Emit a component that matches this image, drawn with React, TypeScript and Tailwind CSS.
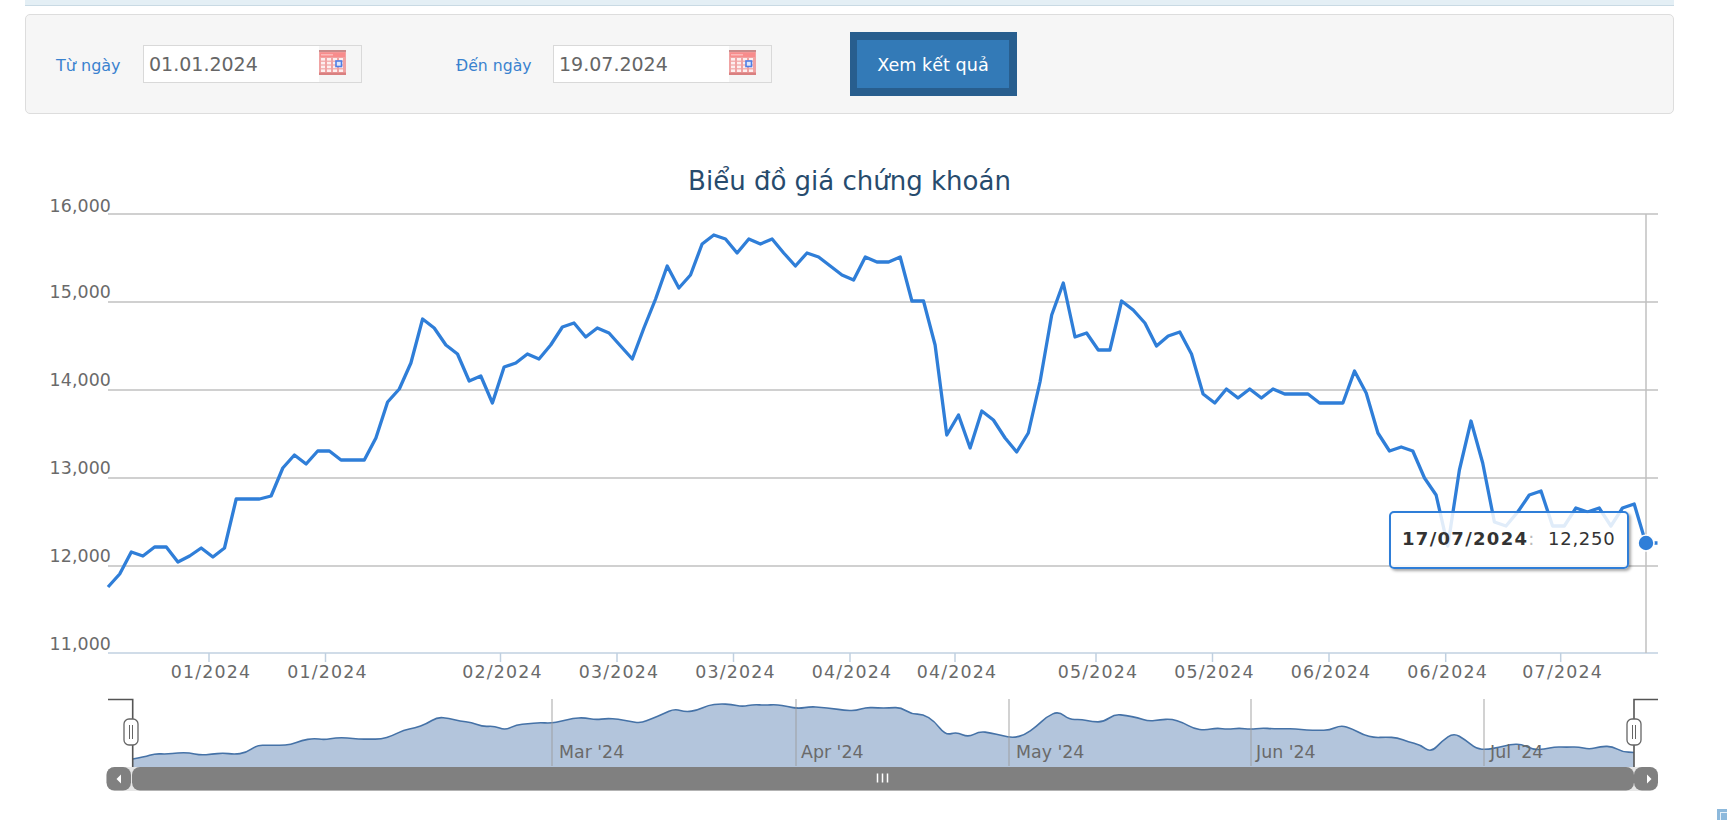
import React from "react";

// y pixel of each trading day on the main chart
const prices = [
  587, 574, 552, 556, 547, 547, 562, 556, 548, 557, 548, 499, 499, 499, 496, 468, 455, 464, 451, 451, 460, 460, 460, 438,
  402, 389, 363, 319, 328, 345, 354, 381, 376, 403, 367, 363, 354, 359, 345, 327, 323, 337, 328, 333, 346, 359, 328, 299,
  266, 288, 275, 244, 235, 239, 253, 239, 244, 239, 253, 266, 253, 257, 266, 275, 280, 257, 262, 262, 257, 301, 301, 345,
  435, 415, 448, 411, 420, 438, 452, 433, 382, 315, 283, 337, 333, 350, 350, 301, 310, 323, 346, 336, 332, 354, 394, 403,
  389, 398, 389, 398, 389, 394, 394, 394, 403, 403, 403, 371, 393, 433, 451, 447, 451, 478, 495, 546, 470, 421, 463, 522,
  526, 512, 495, 491, 526, 526, 508, 512, 508, 526, 508, 504, 543, 543,
];

const mainPoints = prices.map((y, i) => `${(108 + i * 11.65).toFixed(1)},${y}`).join(" ");

// navigator line is the same series squeezed and smoothed
const navXY = prices.map((y, i) => [132.7 + i * 11.29, 717 + (y - 319) * 0.157]);
let navLine = `M${navXY[0][0]} ${navXY[0][1]}`;
for (let i = 1; i < navXY.length - 1; i++) {
  const midX = (navXY[i][0] + navXY[i + 1][0]) / 2;
  const midY = (navXY[i][1] + navXY[i + 1][1]) / 2;
  navLine += ` Q${navXY[i][0]} ${navXY[i][1]} ${midX} ${midY}`;
}
navLine += ` L1634 752.5`;

const gridLines = [214, 302, 390, 478, 566];
const yLabels = [
  { text: "16,000", y: 212 },
  { text: "15,000", y: 298 },
  { text: "14,000", y: 386 },
  { text: "13,000", y: 474 },
  { text: "12,000", y: 562 },
  { text: "11,000", y: 650 },
];
const xLabels = [
  { text: "01/2024", x: 209 },
  { text: "01/2024", x: 325.5 },
  { text: "02/2024", x: 500.5 },
  { text: "03/2024", x: 617 },
  { text: "03/2024", x: 733.5 },
  { text: "04/2024", x: 850 },
  { text: "04/2024", x: 955 },
  { text: "05/2024", x: 1096 },
  { text: "05/2024", x: 1212.5 },
  { text: "06/2024", x: 1329 },
  { text: "06/2024", x: 1445.7 },
  { text: "07/2024", x: 1560.7 },
];
const navLabels = [
  { text: "Mar '24", lineX: 552, x: 559 },
  { text: "Apr '24", lineX: 796, x: 801 },
  { text: "May '24", lineX: 1009, x: 1016 },
  { text: "Jun '24", lineX: 1251, x: 1256 },
  { text: "Jul '24", lineX: 1484, x: 1490 },
];

const CalendarIcon = () => (
  <svg width="27" height="25" viewBox="0 0 27 25" className="shrink-0">
    <rect x="0" y="1" width="27" height="24" fill="#f0a3a3" />
    <rect x="0" y="0" width="27" height="2" fill="#c98a8a" />
    <rect x="1" y="2.5" width="25" height="4.5" fill="#f88c8c" />
    <rect x="2" y="4" width="12" height="1.5" fill="#fbb9b9" />
    {[0, 1, 2, 3].map((row) =>
      [0, 1, 2, 3].map((col) => (
        <rect key={`${row}-${col}`} x={2 + col * 6} y={8 + row * 3.8} width="4" height="2.6" fill="#fdeeee" />
      ))
    )}
    <rect x="0" y="22.5" width="27" height="2.5" fill="#d98080" />
    <rect x="17" y="11" width="5.5" height="5.5" fill="#dfe7fb" stroke="#4f7fe6" strokeWidth="1.6" />
  </svg>
);

const DateInput = ({ value }: { value: string }) => (
  <div className="flex h-[38px] w-[219px] items-stretch border border-[#d9d9d9] bg-[#f5f5f5]">
    <div className="flex w-[175px] items-center bg-white pl-[5px] pt-[1px] text-[19px] text-[#666666]">{value}</div>
    <div className="pt-[4px]">
      <CalendarIcon />
    </div>
  </div>
);

const labelFont = "font-['DejaVu_Sans',sans-serif]";

const Chart = () => (
  <svg width="1727" height="660" viewBox="0 160 1727 660" className="block">
    {gridLines.map((y) => (
      <line key={y} x1="108" x2="1658" y1={y} y2={y} stroke="#c0c0c0" strokeWidth="1.5" />
    ))}
    <line x1="108" x2="1658" y1="653" y2="653" stroke="#c0d0e0" strokeWidth="1.5" />
    <line x1="1646" x2="1646" y1="214" y2="653" stroke="#c0c0c0" strokeWidth="1.5" />
    {yLabels.map((l) => (
      <text key={l.text} x="111" y={l.y} textAnchor="end" fontSize="17.4" letterSpacing="0.1" fill="#6a6a6a" className={labelFont}>
        {l.text}
      </text>
    ))}
    {xLabels.map((l, i) => (
      <g key={i}>
        <line x1={l.x} x2={l.x} y1="653" y2="662" stroke="#c0d0e0" strokeWidth="1.5" />
        <text x={l.x + 2} y="678" textAnchor="middle" fontSize="17.4" letterSpacing="1.2" fill="#6a6a6a" className={labelFont}>
          {l.text}
        </text>
      </g>
    ))}

    <polyline points={mainPoints} fill="none" stroke="#2f7ed8" strokeWidth="3.3" strokeLinejoin="round" />
    <circle cx="1646" cy="543" r="8" fill="#2f7ed8" stroke="#ffffff" strokeWidth="1.6" />

    {/* navigator */}
    <path d={`${navLine} L1634 767 L132.7 767 Z`} fill="#b3c5dc" />
    <path d={navLine} fill="none" stroke="#4572a7" strokeWidth="1.6" />
    {navLabels.map((l) => (
      <g key={l.text}>
        <line x1={l.lineX} x2={l.lineX} y1="699" y2="766" stroke="#9a9a9a" strokeOpacity="0.6" strokeWidth="1.5" />
        <text x={l.x} y="758" fontSize="17.4" fill="#6a6a6a" className={labelFont}>
          {l.text}
        </text>
      </g>
    ))}
    <path d="M108 699.5 H132.7 V767 M1658 699.5 H1634 V767" fill="none" stroke="#555555" strokeWidth="1.6" />
    {[131, 1634].map((x) => (
      <g key={x}>
        <rect x={x - 7} y="719" width="14" height="26" rx="5" fill="#ffffff" stroke="#666666" strokeWidth="1.3" />
        <line x1={x - 1.5} x2={x - 1.5} y1="725" y2="739" stroke="#666666" />
        <line x1={x + 1.5} x2={x + 1.5} y1="725" y2="739" stroke="#666666" />
      </g>
    ))}

    {/* scrollbar */}
    <rect x="106.5" y="767" width="1551.5" height="24" fill="#e6e6e6" rx="8" />
    <rect x="132" y="767" width="1502" height="23.5" rx="8" fill="#808080" />
    <rect x="106.5" y="767" width="24.5" height="23.5" rx="8" fill="#808080" />
    <rect x="1634" y="767" width="24" height="23.5" rx="8" fill="#808080" />
    <path d="M116.5 779 L121 774.5 V783.5 Z" fill="#ffffff" />
    <path d="M1651.5 779 L1647 774.5 V783.5 Z" fill="#ffffff" />
    <path d="M877.5 773.5 V782.5 M882.5 773.5 V782.5 M887.5 773.5 V782.5" stroke="#ffffff" strokeWidth="1.5" />
  </svg>
);

export default function App() {
  return (
    <div className="relative h-[820px] w-full overflow-hidden bg-white font-['DejaVu_Sans',sans-serif]">
      <div className="ml-[25px] mr-[53px] h-[6px] border-b border-[#c9dae4] bg-[#e4eff5]" />

      <div className="ml-[25px] mr-[53px] mt-[8px] flex h-[100px] items-center rounded-[5px] border border-[#dddddd] bg-[#f6f6f6]">
        <span className="ml-[30px] w-[87px] pt-[3px] text-[16px] text-[#3a82cf]">Từ ngày</span>
        <DateInput value="01.01.2024" />
        <span className="ml-[94px] w-[97px] pt-[3px] text-[15.7px] text-[#3a82cf]">Đến ngày</span>
        <DateInput value="19.07.2024" />
        <button className="ml-[78px] flex h-[64px] w-[167px] items-center justify-center border-y-[8px] border-l-[7px] border-r-[8px] border-[#285e8e] bg-[#337ab7] pt-[2px] text-[17.6px] text-white">
          Xem kết quả
        </button>
      </div>

      <div className="ml-[25px] mr-[53px] mt-[51px] h-[33px] text-center text-[26px] leading-[33px] text-[#274b6d]">Biểu đồ giá chứng khoán</div>

      <div className="absolute left-0 top-[160px]">
        <Chart />
      </div>

      {/* tooltip over the chart */}
      <div className="absolute left-[1389px] top-[511px] flex h-[58px] w-[240px] items-center whitespace-nowrap rounded-[5px] border-2 border-[#2f7ed8] bg-white/85 pb-[4px] pl-[11px] text-[18px] tracking-[0.7px] text-[#333333] shadow-[2px_2px_3px_rgba(0,0,0,0.35)]">
        <b className="tracking-[1.3px]">17/07/2024</b>
        <span className="text-[#bbbbbb]">:</span>
        <span className="ml-[13px]">12,250</span>
      </div>

      {/* scroll-to-top corner */}
      <div className="absolute left-[1717px] top-[809px] h-[14px] w-[14px] border-[3px] border-[#8db9dc] bg-[#8db9dc]">
        <div className="h-full w-full border-l-[1.5px] border-t-[1.5px] border-[#e6f0f8]" />
      </div>
    </div>
  );
}
